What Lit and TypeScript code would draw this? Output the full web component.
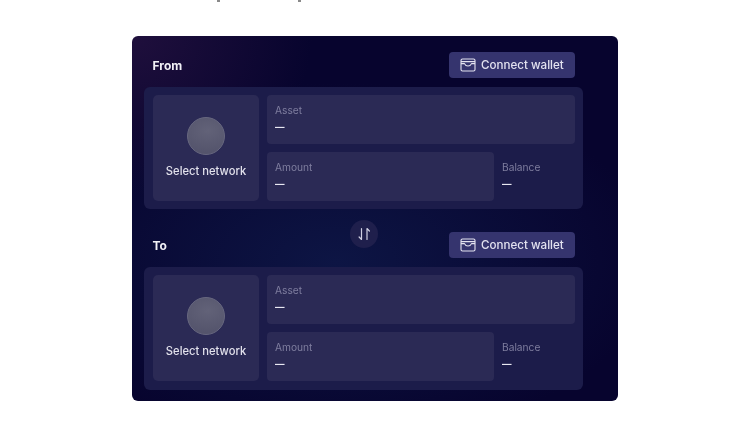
import { LitElement, html, css } from "lit";
import { customElement } from "lit/decorators.js";

@customElement("app-root")
export class AppRoot extends LitElement {
  static styles = css`
    :host {
      display: block;
      width: 750px;
      height: 430px;
      overflow: hidden;
      background: #fff;
      font-family: "Inter", "Open Sans", sans-serif;
    }
    .page {
      padding: 0 132px;
      filter: blur(0.35px);
    }
    .cut {
      height: 2px;
      margin-bottom: 34px;
      display: flex;
      padding-left: 85px;
      gap: 78px;
    }
    .cut span {
      width: 3px;
      height: 1.5px;
      background: #8a8a8a;
    }
    .card {
      position: relative;
      width: 486px;
      height: 365px;
      box-sizing: border-box;
      border-radius: 6px;
      padding: 16px 35px 0 12px;
      background:
        radial-gradient(ellipse 180px 160px at 0% 0%, #1f0f3c 0%, rgba(31, 15, 60, 0) 100%),
        radial-gradient(ellipse 320px 180px at 42% 62%, #0d1544 0%, rgba(13, 21, 68, 0) 100%),
        #07042e;
      display: flex;
      flex-direction: column;
    }
    .head {
      display: flex;
      align-items: center;
      justify-content: space-between;
      height: 26px;
      margin: 0 8px 9px 8.5px;
    }
    .second {
      margin-top: 23px;
    }
    .title {
      font-size: 12px;
      font-weight: 700;
      color: #f1f0f6;
    }
    .btn {
      display: flex;
      align-items: center;
      gap: 5px;
      box-sizing: border-box;
      width: 126px;
      height: 26px;
      padding-left: 11px;
      border-radius: 4px;
      background: #35346e;
      color: #e4e3f0;
      font-size: 11.6px;
      font-weight: 500;
    }
    .btn svg {
      display: block;
    }
    .panel {
      box-sizing: border-box;
      width: 439px;
      height: 122px;
      padding: 8px 8px 8px 9px;
      border-radius: 6px;
      background: #1c1c4a;
      display: grid;
      grid-template-columns: 106px 227px 73px;
      grid-template-rows: 49px 49px;
      column-gap: 8px;
      row-gap: 8px;
    }
    .panel.low {
      height: 123px;
    }
    .net {
      grid-row: 1 / 3;
      border-radius: 5px;
      background: #2b2a55;
      display: flex;
      flex-direction: column;
      align-items: center;
      padding-top: 22px;
      box-sizing: border-box;
      color: #e2e1ec;
      font-size: 11.2px;
      font-weight: 500;
    }
    .globe {
      width: 38px;
      height: 38px;
      border-radius: 50%;
      margin-bottom: 9px;
      box-sizing: border-box;
      border: 1px solid #67677f;
      background:
        radial-gradient(ellipse 30px 22px at 55% 35%, #626278 0%, rgba(98, 98, 120, 0) 100%),
        #54546c;
    }
    .field {
      border-radius: 4px;
      background: #2b2a55;
      padding: 9px 8px 0;
      box-sizing: border-box;
    }
    .asset {
      grid-column: 2 / 4;
    }
    .bal {
      background: none;
      padding-left: 0;
    }
    .lab {
      font-size: 10.2px;
      line-height: 12px;
      color: #7f7e9f;
    }
    .val {
      font-size: 9.5px;
      font-weight: 700;
      line-height: 14px;
      margin-top: 4px;
      color: #e8e8f2;
    }
    .swap {
      position: absolute;
      left: 217.5px;
      top: 184px;
      width: 28px;
      height: 28px;
      border-radius: 50%;
      background: #1f1f4c;
      display: flex;
      align-items: center;
      justify-content: center;
    }
    .swap svg {
      display: block;
    }
  `;

  private wallet() {
    return html`<svg width="16" height="14" viewBox="0 0 16 14" fill="none" stroke="#e4e3f0" stroke-width="1.1" stroke-linejoin="round">
      <rect x="1" y="1" width="14" height="12" rx="1.5"></rect>
      <path d="M1 3.6h14M1 5.6h3.5c.6 1.6 2 2.4 3.5 2.4s2.9-.8 3.5-2.4H15"></path>
    </svg>`;
  }

  private section(title: string, second = false) {
    return html`
      <div class="head ${second ? "second" : ""}">
        <div class="title">${title}</div>
        <div class="btn">${this.wallet()}Connect wallet</div>
      </div>
      <div class="panel ${second ? "low" : ""}">
        <div class="net"><div class="globe"></div>Select network</div>
        <div class="field asset"><div class="lab">Asset</div><div class="val">—</div></div>
        <div class="field"><div class="lab">Amount</div><div class="val">—</div></div>
        <div class="field bal"><div class="lab">Balance</div><div class="val">—</div></div>
      </div>
    `;
  }

  render() {
    return html`<div class="page">
      <div class="cut"><span></span><span></span></div>
      <div class="card">
        ${this.section("From")}
        ${this.section("To", true)}
        <div class="swap">
          <svg width="14" height="14" viewBox="0 0 14 14" fill="none" stroke="#cfcfe2" stroke-width="1.2" stroke-linecap="round" stroke-linejoin="round">
            <path d="M4.5 1.5v11L2.1 10"></path>
            <path d="M10 12.5v-11L12.4 4"></path>
          </svg>
        </div>
      </div>
    </div>`;
  }
}
